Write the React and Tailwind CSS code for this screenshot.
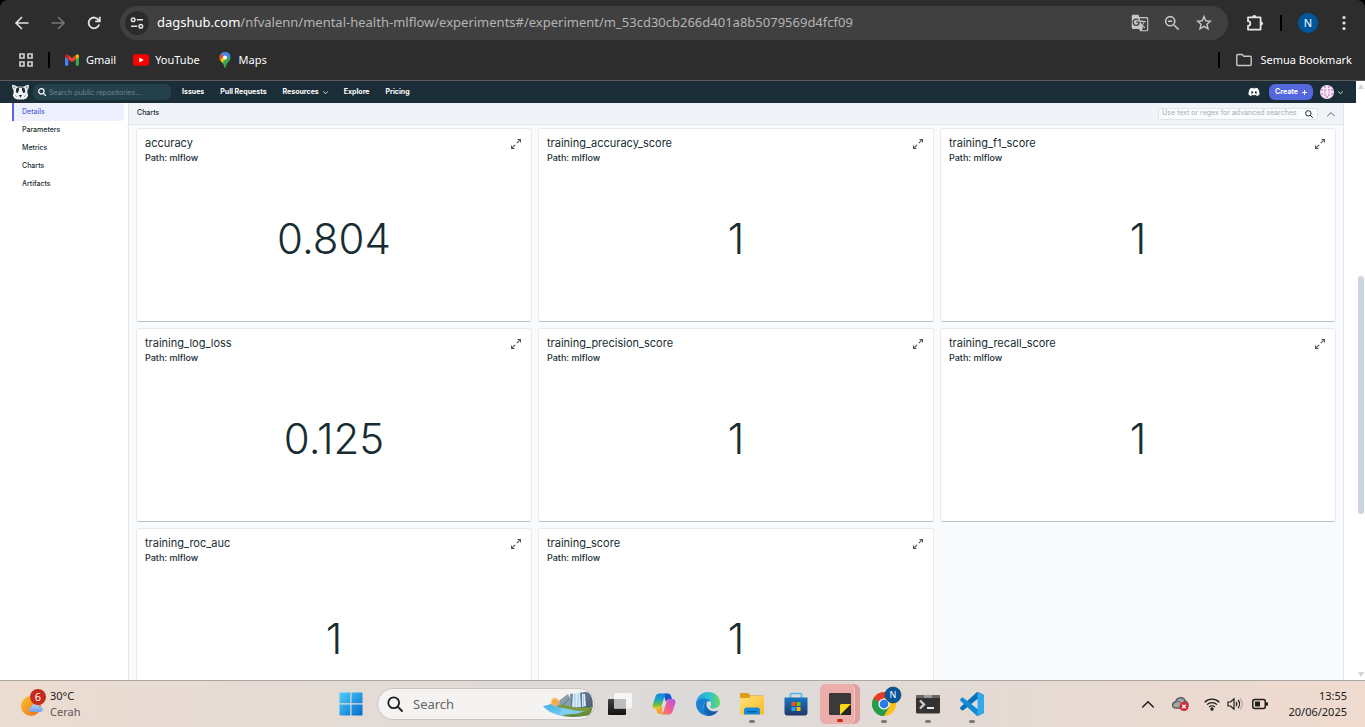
import React from "react";
import { MdGTranslate } from "react-icons/md";
import { FaDiscord } from "react-icons/fa";

const uiFont = "font-['Noto_Sans','Open_Sans',sans-serif]";

const charts = [
  { name: "accuracy", value: "0.804" },
  { name: "training_accuracy_score", value: "1" },
  { name: "training_f1_score", value: "1" },
  { name: "training_log_loss", value: "0.125" },
  { name: "training_precision_score", value: "1" },
  { name: "training_recall_score", value: "1" },
  { name: "training_roc_auc", value: "1" },
  { name: "training_score", value: "1" },
];

function Line({ className, children, width = 1.6, box = "0 0 16 16" }) {
  return (
    <svg
      viewBox={box}
      className={className}
      fill="none"
      stroke="currentColor"
      strokeWidth={width}
      aria-hidden="true"
    >
      {children}
    </svg>
  );
}

function Magnifier({ className, width = 1.6 }) {
  return (
    <Line className={className} width={width}>
      <circle cx="6.7" cy="6.7" r="5.4" />
      <path d="M10.7 10.7 15 15" strokeLinecap="round" />
    </Line>
  );
}

function Chevron({ className, up = false, width = 1.6 }) {
  return (
    <Line className={className} width={width}>
      <path d={up ? "M1 12 8 5l7 7" : "M1 5l7 7 7-7"} strokeLinecap="round" strokeLinejoin="round" />
    </Line>
  );
}

/* ---------- Browser ---------- */

function GmailIcon() {
  return (
    <svg viewBox="0 0 16 16" className="size-4" aria-hidden="true">
      <path d="M1 4.2v8.6c0 .6.4 1 1 1h2.3V7.2Z" fill="#4285f4" />
      <path d="M15 4.2v8.6c0 .6-.4 1-1 1h-2.3V7.2Z" fill="#34a853" />
      <path d="M1 4.2C1 2.5 2.7 2 4 2.9l.3.3v4.3L1 5.1Z" fill="#c5221f" />
      <path d="M15 4.2c0-1.7-1.7-2.2-3-1.3l-.3.3v4.3L15 5.1Z" fill="#fbbc04" />
      <path d="M4.3 3.1 8 5.9l3.7-2.8v4.4L8 10.3 4.3 7.5Z" fill="#ea4335" />
    </svg>
  );
}

function YouTubeIcon() {
  return (
    <svg viewBox="0 0 16 16" className="size-4" aria-hidden="true">
      <rect x="0" y="2.3" width="16" height="11.4" rx="3" fill="#f00" />
      <path d="M6.3 5.5v5L10.7 8Z" fill="#fff" />
    </svg>
  );
}

function MapsIcon() {
  return (
    <svg viewBox="0 0 16 16" className="size-4" aria-hidden="true">
      <clipPath id="pin">
        <path d="M8 0a5.5 5.5 0 0 0-5.5 5.5c0 3.8 4 5 4.7 9.2.2 1.7 1.4 1.7 1.6 0 .7-4.2 4.7-5.4 4.7-9.2A5.5 5.5 0 0 0 8 0Z" />
      </clipPath>
      <g clipPath="url(#pin)">
        <path d="M0 0h16v16H0Z" fill="#34a853" />
        <path d="M4 0h12v2L8 5.5 4.6 2Z" fill="#4285f4" />
        <path d="M13 1.5 4.8 11.4 1 8l5-5Z" fill="#fbbc04" />
        <path d="M2 1.5 4 .8l3 3L3.2 8 1 6Z" fill="#ea4335" />
        <path d="M4.2 1.6 6 0h7l1 2.7-4.4 4.6Z" fill="#4285f4" />
      </g>
      <circle cx="8" cy="5.5" r="2" fill="#fff" />
    </svg>
  );
}

function ToolButton({ label, children, className = "w-9" }) {
  return (
    <button type="button" aria-label={label} className={`flex h-9 shrink-0 items-center justify-center ${className}`}>
      {children}
    </button>
  );
}

function Browser() {
  return (
    <div className="shrink-0 bg-black">
      <div className={`rounded-t-lg border-b border-[#5b5b5b] bg-[#2d2d2d] pb-1.5 text-[#e3e3e3] ${uiFont}`}>
        <div className="flex h-[46px] items-center pr-[3px] pl-1">
          <ToolButton label="Back">
            <Line className="size-4"><path d="M14.5 8H2.5M8 2 2 8l6 6" /></Line>
          </ToolButton>
          <ToolButton label="Forward">
            <Line className="size-4 text-[#777]"><path d="M1.5 8h12M8 2l6 6-6 6" /></Line>
          </ToolButton>
          <ToolButton label="Reload">
            <Line className="size-4" width={1.8}>
              <path d="M13.2 9.5A5.4 5.4 0 1 1 12.6 5L13.6 6.2M13.8 1.8v4.6H9.2" />
            </Line>
          </ToolButton>
          <div className="ml-2 flex h-[34px] min-w-0 flex-1 items-center rounded-full bg-[#404040] pr-2 pl-[5px]">
            <button type="button" aria-label="Site information" className="flex size-6 shrink-0 items-center justify-center rounded-full bg-[#2b2b2b]">
              <Line className="size-4" width={1.5}>
                <circle cx="4.2" cy="4.8" r="1.8" />
                <path d="M7.8 4.8H14M2 11.2h6.2" />
                <circle cx="11.8" cy="11.2" r="1.8" />
              </Line>
            </button>
            <div role="textbox" aria-label="Address" tabIndex={0} className="min-w-0 flex-1 truncate pl-2 text-[13px] text-[#b4b4b4]">
              <span className="text-white">dagshub.com</span>/nfvalenn/mental-health-mlflow/experiments#/experiment/m_53cd30cb266d401a8b5079569d4fcf09
            </div>
            <ToolButton label="Translate" className="w-8 text-[#c7c7c7]"><MdGTranslate className="size-[18px]" /></ToolButton>
            <ToolButton label="Zoom out" className="w-8 text-[#c7c7c7]">
              <Line className="size-4">
                <circle cx="6.2" cy="6.2" r="4.6" /><path d="M10 10l4.6 4.6M4 6.2h4.4" />
              </Line>
            </ToolButton>
            <ToolButton label="Bookmark this page" className="w-8 text-[#c7c7c7]">
              <Line className="size-4" width={1.4}>
                <path d="m8 1.5 1.8 4.3 4.7.4-3.6 3 1.1 4.6L8 11.3l-4 2.5 1.1-4.6-3.6-3 4.700-.4Z" />
              </Line>
            </ToolButton>
          </div>
          <ToolButton label="Extensions" className="ml-[9px] w-9">
            <Line className="size-5" width={1.8} box="0 0 20 20">
              <path d="M3 4.400h12.600v12.200H3v-3.800a2.300 2.300 0 0 0 0-4.600Z" strokeLinejoin="round" />
              <path d="M7.200 4a2.100 2.100 0 0 1 4.200 0ZM16 8.400a2.100 2.100 0 0 1 0 4.200Z" fill="currentColor" stroke="none" />
            </Line>
          </ToolButton>
          <span className="ml-[7px] h-4 w-0.5 bg-black" />
          <ToolButton label="Profile" className="ml-2 w-9">
            <span className="flex size-5 items-center justify-center rounded-full bg-[#00579c] text-[11px] text-white">N</span>
          </ToolButton>
          <ToolButton label="Menu">
            <svg viewBox="0 0 4 16" className="h-4 w-1" fill="currentColor" aria-hidden="true">
              <circle cx="2" cy="2.500" r="1.600" /><circle cx="2" cy="8" r="1.600" /><circle cx="2" cy="13.500" r="1.600" />
            </svg>
          </ToolButton>
        </div>
        <div className="flex h-7 items-center pr-[13px] pl-[18px] text-[11px] text-white">
          <button type="button" aria-label="Apps">
            <Line className="size-4 text-[#d0d0d0]" width={1.700}>
              <path d="M2 2h4v4H2zM10 2h4v4h-4zM2 10h4v4H2zM10 10h4v4h-4z" />
            </Line>
          </button>
          <span className="ml-3.5 h-4 w-0.5 bg-black" />
          <div className="ml-3.5 flex gap-[17px]">
            <a href="#gmail" className="flex items-center gap-1.5"><GmailIcon />Gmail</a>
            <a href="#youtube" className="flex items-center gap-1.5"><YouTubeIcon />YouTube</a>
            <a href="#maps" className="flex items-center gap-1.5"><MapsIcon />Maps</a>
          </div>
          <span className="ml-auto h-4 w-0.5 bg-black" />
          <button type="button" className="ml-4 flex items-center gap-2">
            <Line className="size-4 text-[#c7c7c7]" width={1.400}>
              <path d="M.8 3.500c0-.6.4-1 1-1h4.400l1.600 1.700h6.400c.6 0 1 .4 1 1v7.300c0 .6-.4 1-1 1H1.800c-.6 0-1-.4-1-1Z" />
            </Line>
            Semua Bookmark
          </button>
        </div>
      </div>
    </div>
  );
}

/* ---------- DagsHub page ---------- */

function Logo() {
  return (
    <svg viewBox="0 0 17 16" className="h-4 w-[17px]" aria-hidden="true">
      <path d="M.2.8C2 .8 3.600 1.500 4.800 2.600h7.400C13.400 1.500 15 .8 16.800.8c.3 2.200-.2 4-1.400 5.200v3.200l.8 2.300-1.600 2.700-3 1.300H5.400l-3-1.300L.8 11.500l.8-2.300V6C.4 4.800-.1 3 .2.8Z" fill="#eef2f3" />
      <path d="M1.300 2 3.600 3.100 2.100 4.900ZM15.700 2l-2.300 1.100 1.500 1.800Z" fill="#7c8b91" />
      <path d="M5 2.400h7l-1 1.300H6Z" fill="#52656d" />
      <path d="M4.200 4.600 7 3.600v2.700L5.600 9.200 3.800 8.300ZM12.800 4.600 10 3.600v2.700l1.400 2.900 1.800-.9Z" fill="#1b2d36" />
      <path d="M7 11h3l-.6 1.400H7.600ZM8.200 12.400h.6v1.400h-.6Z" fill="#1b2d36" />
      <path d="M3.200 11.200 5 13M13.800 11.200 12 13" stroke="#7c8b91" strokeWidth=".8" />
    </svg>
  );
}

function Avatar() {
  return (
    <svg viewBox="0 0 14 14" className="size-3.5" aria-hidden="true">
      <clipPath id="face"><circle cx="7" cy="7" r="7" /></clipPath>
      <g clipPath="url(#face)">
        <path d="M0 0h14v14H0z" fill="#f5e9f5" />
        <path d="M4 1h2v2H4zM8 1h2v2H8zM1 4h2v2H1zM4 4h2v2H4zM8 4h2v2H8zM11 4h2v2h-2zM4 7h2v1H4zM8 7h2v1H8zM1 8h2v2H1zM11 8h2v2h-2zM4 9h2v2H4zM8 9h2v2H8zM6 11h2v2H6z" fill="#df9bdb" />
      </g>
    </svg>
  );
}

function SiteHeader() {
  return (
    <header className="flex h-[22px] shrink-0 items-center bg-[#1b2d36] pr-[13px] pl-3 text-[7px] font-bold text-white">
      <a href="#home" aria-label="DagsHub"><Logo /></a>
      <div className="ml-1 flex h-4 w-[138px] items-center gap-[3px] rounded-md bg-[#24404b] pl-[5px]">
        <Magnifier className="size-2 shrink-0" width={2.4} />
        <input aria-label="Search repositories" className="h-4 w-full min-w-0 bg-transparent font-normal outline-none placeholder:text-[#71838b]" placeholder="Search public repositories..." />
      </div>
      <nav className="ml-[11px] flex items-center gap-4">
        <a href="#issues">Issues</a>
        <a href="#pulls">Pull Requests</a>
        <button type="button" className="flex items-center gap-1">Resources<Chevron className="size-[5px]" width={2.6} /></button>
        <a href="#explore">Explore</a>
        <a href="#pricing">Pricing</a>
      </nav>
      <a href="#discord" aria-label="Discord" className="ml-auto"><FaDiscord className="size-3" /></a>
      <button type="button" className="ml-[9px] flex h-4 w-11 items-center justify-center gap-1 rounded-md bg-[#5467de]">
        Create
        <Line className="size-[5px]" width={3}><path d="M8 0v16M0 8h16" /></Line>
      </button>
      <button type="button" aria-label="Account" className="ml-[7px] flex items-center gap-1">
        <Avatar /><Chevron className="size-[5px]" width={2.6} />
      </button>
    </header>
  );
}

function Sidebar() {
  return (
    <nav className="w-32 shrink-0 pr-1 pl-3 text-[7px] font-medium text-[#172d32]">
      <a href="#details" className="flex h-[18px] items-center rounded-r-sm border-l-2 border-[#5467de] bg-[#eef0fd] pl-2 text-[#5467de]">Details</a>
      {["Parameters", "Metrics", "Charts", "Artifacts"].map((item) => (
        <a key={item} href={`#${item}`} className="flex h-[18px] items-center pl-2.5">{item}</a>
      ))}
    </nav>
  );
}

function ChartCard({ name, value }) {
  return (
    <article className="flex h-[194px] flex-col rounded-[3px] border border-[#e8ebee] border-b-[#bfc2c6] bg-white px-2 pt-[7px] text-[#172d32]">
      <div className="flex items-start justify-between">
        <div>
          <h2 className="text-[11px] leading-[14px]">{name}</h2>
          <p className="text-[9px] leading-4 font-medium">Path: mlflow</p>
        </div>
        <button type="button" aria-label={`Expand ${name}`} className="mt-[3px] mr-0.5 text-[#555]">
          <svg viewBox="0 0 10 10" className="size-2.5" aria-hidden="true">
            <path d="M6.500.5h3v3M9.300.7 5.800 4.200M3.500 9.500h-3v-3M.7 9.300l3.500-3.500" fill="none" stroke="currentColor" strokeWidth="1.200" />
          </svg>
        </button>
      </div>
      <p className="mt-12 text-center text-[42px] leading-[50px] font-light">{value}</p>
    </article>
  );
}

function Charts() {
  return (
    <main className="mr-3 flex min-w-0 flex-1 flex-col border-x border-[#dfe6ef] bg-[#f8fafc]">
      <div className="flex h-[22px] shrink-0 items-center border-b border-[#dfe6ef] bg-[#f0f4f9] px-2 text-[7px] font-medium text-[#172d32]">
        <h1>Charts</h1>
        <div className="ml-auto flex h-3 w-40 items-center rounded-[3px] border border-[#dfe4ea] bg-[#fafbfd] pr-1 pl-[3px]">
          <input aria-label="Search charts" className="h-2.5 min-w-0 flex-1 bg-transparent font-normal outline-none placeholder:text-[#a5adb5]" placeholder="Use text or regex for advanced searches" />
          <Magnifier className="size-2 shrink-0" width={2} />
        </div>
        <button type="button" aria-label="Collapse charts" className="ml-[9px] text-[#526078]"><Chevron up className="size-2" width={2} /></button>
      </div>
      <div className="grid grid-cols-3 gap-1.5 px-[7px] pt-[3px]">
        {charts.map((chart) => <ChartCard key={chart.name} {...chart} />)}
      </div>
    </main>
  );
}

function PageScrollbar() {
  return (
    <div className="flex w-[9px] shrink-0 flex-col items-center bg-white py-[3px] text-[#cbd5e1]" aria-hidden="true">
      <svg viewBox="0 0 6 5" className="h-[5px] w-1.5"><path d="M3 0 6 5H0Z" fill="currentColor" /></svg>
      <div className="flex-[187_0_0]" />
      <div className="w-1.5 flex-[238_0_0] rounded-full bg-[#cbd5e1]" />
      <div className="flex-[158_0_0]" />
      <svg viewBox="0 0 6 5" className="h-[5px] w-1.5"><path d="M0 0h6L3 5Z" fill="currentColor" /></svg>
    </div>
  );
}

/* ---------- Taskbar ---------- */

function WeatherIcon() {
  return (
    <svg viewBox="0 0 28 30" className="h-[30px] w-7" aria-hidden="true">
      <defs>
        <linearGradient id="sun" x1="0" y1="0" x2="1" y2="1"><stop stopColor="#f8c62c" /><stop offset="1" stopColor="#ef6b16" /></linearGradient>
        <linearGradient id="cloud" x1="0" y1="0" x2="0" y2="1"><stop stopColor="#b7d4fb" /><stop offset="1" stopColor="#6f9fee" /></linearGradient>
      </defs>
      <circle cx="11" cy="17" r="10" fill="url(#sun)" />
      <path d="M12 23c-4 0-4-5-.5-5 1-4.500 7-4 7.500-.5 5-.5 5 5.500 1 5.500Z" fill="url(#cloud)" />
      <circle cx="18" cy="8" r="8" fill="#c42b1c" />
      <text x="18" y="12" textAnchor="middle" fontSize="11" fill="#fff">6</text>
    </svg>
  );
}

function StartIcon() {
  return (
    <svg viewBox="0 0 24 24" className="size-6" aria-hidden="true">
      <linearGradient id="start" x1="0" y1="0" x2="24" y2="24" gradientUnits="userSpaceOnUse"><stop stopColor="#4fd0fb" /><stop offset="1" stopColor="#0069cb" /></linearGradient>
      <path d="M1.500.5h9.800v10.800H.5V1.500a1 1 0 0 1 1-1ZM12.500.5h10a1 1 0 0 1 1 1v9.800h-11ZM.5 12.500h10.800v11H1.500a1 1 0 0 1-1-1ZM12.500 12.500h11v10a1 1 0 0 1-1 1h-10Z" fill="url(#start)" />
    </svg>
  );
}

function Landscape() {
  return (
    <svg viewBox="0 0 50 26" className="h-[26px] w-[50px]" aria-hidden="true">
      <defs>
        <linearGradient id="rock" x1="0" y1="0" x2="1" y2="1"><stop stopColor="#8292a8" /><stop offset="1" stopColor="#3d5369" /></linearGradient>
        <linearGradient id="water" x1="0" y1="0" x2="1" y2="1"><stop stopColor="#3bb0e8" /><stop offset="1" stopColor="#9cdcf8" /></linearGradient>
        <radialGradient id="glow"><stop stopColor="#f8a13a" /><stop offset=".5" stopColor="#f8ab4c" /><stop offset="1" stopColor="#fcd9a5" stopOpacity="0" /></radialGradient>
        <clipPath id="scene"><path d="M0 15C9 14 16 8 24 3c8-5 18-3 22-1 5 5 5 16 0 22-10 3-36 4-46-9Z" /></clipPath>
      </defs>
      <g clipPath="url(#scene)">
        <path d="M0 13h50v13H0Z" fill="url(#water)" />
        <path d="M10 14 25 3l7 14Z" fill="#8aa0af" />
        <path d="M27 3 50 0v19l-22-2Z" fill="url(#rock)" />
        <path d="M30 2h7l1 14-9 1ZM39 3l3 0 1 12-4 1Z" fill="#d9edf9" />
        <path d="M32 3v13M35 3v13M40.500 4v11" stroke="#8bbee0" strokeWidth=".8" />
        <path d="M13 15c8-3 12 0 17 1s15 1 20-1v7c-12 2-20-2-28-4Z" fill="#7e9a3c" />
        <path d="M16 17c10 0 18 4 26 3-8 4-18 3-28 5 4-3 7-6 2-8Z" fill="#83cdf0" />
        <path d="M17 26c5-4 14-2 20-4s9-2 13-4v8Z" fill="#6b8b3a" />
        <path d="m44 1 3 18M27 7l-7 7" stroke="#5e7287" />
      </g>
      <circle cx="12" cy="11" r="5.500" fill="url(#glow)" />
    </svg>
  );
}

function TaskViewIcon() {
  return (
    <svg viewBox="0 0 24 24" className="size-6" aria-hidden="true">
      <linearGradient id="dark" x1="0" y1="0" x2="0" y2="1"><stop stopColor="#444" /><stop offset="1" stopColor="#111" /></linearGradient>
      <rect y="7" width="18" height="16" rx="1" fill="url(#dark)" />
      <rect x="6" y="1" width="18" height="15.500" rx="1" fill="#f5f5f5" />
      <path d="M6 7h12v9.500H7a1 1 0 0 1-1-1Z" fill="#bdbdbd" />
    </svg>
  );
}

function CopilotIcon() {
  return (
    <svg viewBox="0 0 24 24" className="size-6" aria-hidden="true">
      <defs>
        <linearGradient id="cpA" x1="0" y1="0" x2="0" y2="1"><stop stopColor="#1183e0" /><stop offset=".4" stopColor="#18a5c4" /><stop offset=".7" stopColor="#6cba4c" /><stop offset="1" stopColor="#f5ce22" /></linearGradient>
        <linearGradient id="cpB" x1="1" y1="0" x2="0" y2="1"><stop stopColor="#a35cf0" /><stop offset=".5" stopColor="#f0599d" /><stop offset="1" stopColor="#fb8548" /></linearGradient>
      </defs>
      <path d="M13 1.500h3c1.800 0 2.500 1 3 2.500l1 3.200c-3-.3-5 .2-6 2.800l-2-6Z" fill="#1657d5" />
      <path d="M10.500 22H8c-1.800 0-2.700-1-3.200-2.700L4 16.500c3 .3 5-.2 6-3Z" fill="#f4a32c" />
      <path d="M7.500 1.500H15c-1.500.3-2 1.500-2.500 3l-3 9.500c-.8 2.200-1.700 3-3.500 3H3.700C.8 17 .1 14.800.8 12.500l2.500-7.600c.8-2.300 1.900-3.400 4.200-3.400Z" fill="url(#cpA)" />
      <path d="M16.500 22.500H9c1.500-.3 2-1.500 2.500-3l3-9.500c.8-2.200 1.700-3 3.500-3h2.300c2.900 0 3.600 2.200 2.900 4.500l-2.500 7.600c-.8 2.300-1.900 3.400-4.200 3.400Z" fill="url(#cpB)" />
    </svg>
  );
}

function EdgeIcon() {
  return (
    <svg viewBox="0 0 24 24" className="size-6" aria-hidden="true">
      <defs>
        <linearGradient id="edA" x1="0" y1="0" x2="1" y2="0"><stop stopColor="#229fdd" /><stop offset=".55" stopColor="#2cc3d3" /><stop offset="1" stopColor="#6bd85a" /></linearGradient>
        <linearGradient id="edB" x1="0" y1="0" x2="1" y2="1"><stop stopColor="#1a7bd0" /><stop offset="1" stopColor="#114b96" /></linearGradient>
      </defs>
      <path d="M0 12C0 5 5.500 0 12 0c7 0 12 5 12 10.300 0 4-3 6.200-6.200 6.200-2.200 0-3.800-.7-3.800-1.500 0-.6 1.200-1 1.200-3C15.200 9 12 7 8.500 7 3.500 7 .8 10 0 12Z" fill="url(#edA)" />
      <path d="M0 12c.6-3.500 4-5.500 7.800-5.500 3 0 5.700 1.200 6.700 3.200-4-1.500-7 1.300-7 5.300 0 5 4.700 8 8 8.300A12 12 0 0 1 0 12Z" fill="#1980d5" />
      <path d="M7.500 15c0-3.500 2.400-5.800 4.700-6-1.200 1-1.700 2-1.700 3.500 0 4 3.700 7 8 7 1.700 0 3-.5 4-1.200A12 12 0 0 1 12.500 24c-3-1-5-4.500-5-9Z" fill="url(#edB)" />
    </svg>
  );
}

function ExplorerIcon() {
  return (
    <svg viewBox="0 0 24 24" className="size-6" aria-hidden="true">
      <linearGradient id="fold" x1="0" y1="0" x2="1" y2="1"><stop stopColor="#ffe07a" /><stop offset="1" stopColor="#fbbb22" /></linearGradient>
      <path d="M0 2c0-.6.400-1 1-1h7l2.500 2.500H23c.6 0 1 .4 1 1V10H0Z" fill="#dc9c13" />
      <path d="M0 6h9l2-2h13v18.500H0Z" fill="url(#fold)" />
      <path d="M4 22.500V18c0-1.500 1-2.500 2.500-2.500h11c1.500 0 2.500 1 2.500 2.500v4.500Z" fill="#178bdb" />
      <path d="M7 19h10v1.500H7z" fill="#085ba2" />
    </svg>
  );
}

function StoreIcon() {
  return (
    <svg viewBox="0 0 24 24" className="size-6" aria-hidden="true">
      <linearGradient id="store" x1="0" y1="0" x2="0" y2="1"><stop stopColor="#1678c5" /><stop offset="1" stopColor="#213667" /></linearGradient>
      <path d="M6.500 6V2.500c0-.6.4-1 1-1h9c.6 0 1 .4 1 1V6" fill="none" stroke="#46bdf0" strokeWidth="1.600" />
      <path d="M.5 5.500h23v15c0 2-1 3-3 3h-17c-2 0-3-1-3-3Z" fill="url(#store)" />
      <path d="M7.500 10h4v4h-4z" fill="#f25022" /><path d="M12.500 10h4v4h-4z" fill="#7fba00" />
      <path d="M7.500 15h4v4h-4z" fill="#20a9f0" /><path d="M12.500 15h4v4h-4z" fill="#ffb900" />
    </svg>
  );
}

function NotesIcon() {
  return (
    <svg viewBox="0 0 24 24" className="size-6" aria-hidden="true">
      <path d="M2 1h20a1 1 0 0 1 1 1v10L12 23H2a1 1 0 0 1-1-1V2a1 1 0 0 1 1-1Z" fill="#3a3a3a" />
      <path d="M12 12h11v11H12Z" fill="#262626" />
      <path d="M23 12 12 23V13.500c0-1 .5-1.500 1.500-1.500Z" fill="#fcd914" />
    </svg>
  );
}

function ChromeIcon() {
  return (
    <svg viewBox="-5 -7 36 36" className="size-9" aria-hidden="true">
      <circle cx="13" cy="11" r="12" fill="#fbc116" />
      <path d="M2.600 5A12 12 0 0 0 13 23l5.200-9H13Z" fill="#259b4d" />
      <path d="M2.600 5 7.800 14h5.400V6Z" fill="#259b4d" />
      <path d="M2.600 5A12 12 0 0 1 23.400 5H13l-5 4.500Z" fill="#e33b2e" />
      <circle cx="13" cy="11" r="5.600" fill="#fff" /><circle cx="13" cy="11" r="4.400" fill="#287be8" />
      <circle cx="22" cy="2" r="8" fill="#07559b" stroke="#173b5c" strokeWidth=".6" />
      <text x="22" y="5" textAnchor="middle" fontSize="9" fill="#fff">N</text>
    </svg>
  );
}

function TerminalIcon() {
  return (
    <svg viewBox="0 0 24 24" className="size-6" aria-hidden="true">
      <rect y="3" width="24" height="18.500" rx="1.500" fill="#333" />
      <path d="M0 6V4.500C0 3.700.7 3 1.500 3h21c.8 0 1.500.7 1.500 1.500V6Z" fill="#666" />
      <path d="M8 3h8v3H8z" fill="#999" />
      <path d="m4 8.500 4 4-4 4" fill="none" stroke="#ccc" strokeWidth="2.400" />
      <path d="M11 16h7" stroke="#fff" strokeWidth="1.800" />
    </svg>
  );
}

function CodeIcon() {
  return (
    <svg viewBox="0 0 24 24" className="size-6" aria-hidden="true">
      <path d="m17.800 0 5.200 2.500c.6.300 1 .8 1 1.500v4L17.500 7 3.300 18.300c-.5.400-1 .4-1.500 0L.4 17c-.5-.5-.5-1.200 0-1.700L16.500.6c.4-.3.800-.5 1.300-.6Z" fill="#0871bb" />
      <path d="M17.800 24 23 21.500c.6-.3 1-.8 1-1.500v-4l-6.500 1L3.300 5.700c-.5-.4-1-.4-1.500 0L.4 7c-.5.500-.5 1.200 0 1.700l16.100 14.700c.4.300.800.500 1.300.6Z" fill="#118bd5" />
      <path d="M17.500.2 23 2.500c.6.300 1 .8 1 1.500v16c0 .7-.4 1.200-1 1.500l-5.500 2.300Z" fill="#30a8ee" />
    </svg>
  );
}

function TaskButton({ label, running = false, children }) {
  return (
    <button type="button" aria-label={label} className="relative flex h-full w-11 shrink-0 items-center justify-center">
      {children}
      {running && <span className="absolute bottom-1 h-[3px] w-1.5 rounded-full bg-[#7c7a79]" />}
    </button>
  );
}

function Taskbar() {
  return (
    <footer className={`flex h-[47px] shrink-0 items-center border-t border-[#aaa6a4] bg-linear-to-r from-[#ecdcd1] via-[#dcdad9] to-[#efdace] text-[#1c1c1c] ${uiFont}`}>
      <button type="button" className="flex w-[329px] shrink-0 items-center gap-0.5 pl-5 text-left text-[11px] leading-4">
        <WeatherIcon />
        <span><span className="block">30°C</span><span className="block text-[#5d5855]">Cerah</span></span>
      </button>
      <TaskButton label="Start"><StartIcon /></TaskButton>
      <div className="mr-[3px] ml-1 flex h-8 w-[218px] shrink-0 items-center rounded-full border border-[#c9c6c4] bg-[#f5f3f2] pr-px pl-[9px]">
        <Magnifier className="size-4 shrink-0" width={1.800} />
        <input aria-label="Search Windows" className="ml-2.5 h-6 min-w-0 flex-1 bg-transparent text-[13px] outline-none placeholder:text-[#646464]" placeholder="Search" />
        <Landscape />
      </div>
      <TaskButton label="Task view"><TaskViewIcon /></TaskButton>
      <TaskButton label="Copilot"><CopilotIcon /></TaskButton>
      <TaskButton label="Microsoft Edge"><EdgeIcon /></TaskButton>
      <TaskButton label="File Explorer" running><ExplorerIcon /></TaskButton>
      <TaskButton label="Microsoft Store"><StoreIcon /></TaskButton>
      <button type="button" aria-label="Sticky Notes" className="relative mx-0.5 flex size-10 shrink-0 items-center justify-center rounded-md bg-[#e2a09d]">
        <span className="absolute inset-y-0 left-0 w-[35px] rounded-md border-r border-[#f4cdca] bg-[#ecaeab]" />
        <span className="relative"><NotesIcon /></span>
        <span className="absolute bottom-0.5 h-[3px] w-1.5 rounded-full bg-[#c42b1c]" />
      </button>
      <TaskButton label="Google Chrome" running><ChromeIcon /></TaskButton>
      <TaskButton label="Terminal" running><TerminalIcon /></TaskButton>
      <TaskButton label="Visual Studio Code" running><CodeIcon /></TaskButton>
      <div className="ml-auto flex shrink-0 items-center pr-[18px]">
        <button type="button" aria-label="Show hidden icons"><Chevron up className="size-3" width={2} /></button>
        <button type="button" aria-label="Cloud storage" className="ml-[18px]">
          <svg viewBox="0 0 17 14" className="h-3.5 w-[17px]">
            <path d="M4 11C-.5 11-.5 5.500 3.500 5 5-.5 12-.5 13 4c3 .5 4 4 2 7Z" fill="#a5aaa9" stroke="#555c5c" strokeWidth="1.300" />
            <path d="M3.500 5c3-1.500 5 0 6 1.500L13 4" fill="none" stroke="#555c5c" />
            <circle cx="12" cy="9.500" r="4.500" fill="#dd2935" />
            <path d="m10.300 7.800 3.400 3.400m0-3.400-3.400 3.400" stroke="#fff" strokeWidth="1.300" />
          </svg>
        </button>
        <button type="button" aria-label="Network, volume and battery" className="ml-[15px] flex items-center gap-[7px]">
          <Line className="size-4" width={1.300}>
            <path d="M.7 6.200a10.400 10.400 0 0 1 14.600 0M3 8.600a7.200 7.200 0 0 1 10 0M5.200 11a4 4 0 0 1 5.600 0" />
            <circle cx="8" cy="13" r="1" fill="currentColor" />
          </Line>
          <Line className="size-4" width={1.200}>
            <path d="M1 6h2.500L7 2.800v10.400L3.500 10H1ZM9 6c1 1.200 1 2.800 0 4M11 4c2 2.300 2 5.700 0 8" />
            <path d="M13 2.500c3 3 3 8 0 11" stroke="#aaa" />
          </Line>
          <Line className="ml-[2px] size-4" width={1.500}>
            <rect x=".8" y="3.500" width="12.500" height="9" rx="2" />
            <path d="M3 5.500h5v5H3z" fill="currentColor" stroke="none" />
            <path d="M15 6.500v3" strokeWidth="2" />
          </Line>
        </button>
        <div className="ml-5 text-right text-[11px] leading-4"><p>13:55</p><p>20/06/2025</p></div>
      </div>
    </footer>
  );
}

export default function App() {
  return (
    <div className="flex h-screen flex-col overflow-hidden bg-white font-['Inter',sans-serif]">
      <Browser />
      <div className="flex min-h-0 flex-1">
        <div className="flex min-w-0 flex-1 flex-col overflow-hidden">
          <SiteHeader />
          <div className="flex min-h-0 flex-1 overflow-hidden">
            <Sidebar />
            <Charts />
          </div>
        </div>
        <PageScrollbar />
      </div>
      <Taskbar />
    </div>
  );
}
